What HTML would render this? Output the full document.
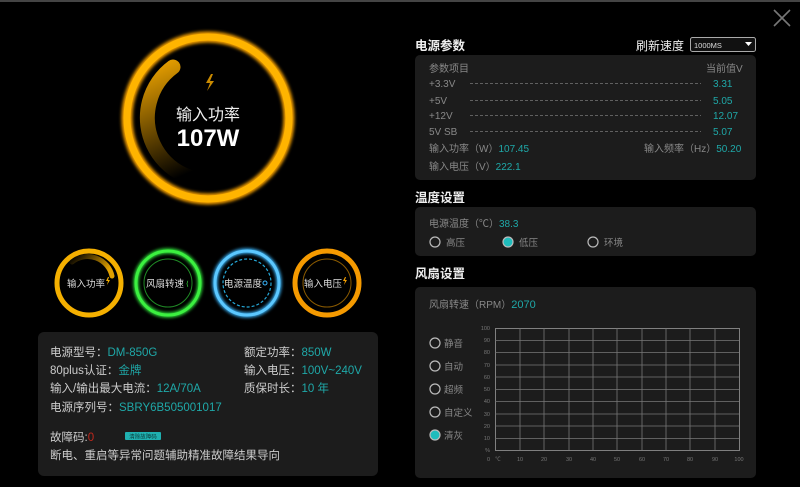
<!DOCTYPE html><html><head><meta charset="utf-8"><style>
body{margin:0;width:800px;height:487px;background:#000;overflow:hidden;font-family:"Liberation Sans","Noto Sans CJK SC",sans-serif}
</style></head><body>
<svg width="800" height="487" viewBox="0 0 800 487" xmlns="http://www.w3.org/2000/svg" style="position:absolute;left:0;top:0;font-family:'Liberation Sans','Noto Sans CJK SC',sans-serif">
<defs>
<linearGradient id="ag" x1="0" y1="0" x2="0.3" y2="1"><stop offset="0" stop-color="#e8a000"/><stop offset="1" stop-color="#000"/></linearGradient>
<linearGradient id="ag2" x1="1" y1="0.5" x2="0" y2="0"><stop offset="0" stop-color="#e0a000"/><stop offset="1" stop-color="#000"/></linearGradient>
<filter id="gl"><feGaussianBlur stdDeviation="1.5"/></filter>
</defs>
<rect x="0" y="0" width="800" height="2" fill="#444"/>
<path d="M774 10 L790 26 M790 10 L774 26" stroke="#777" stroke-width="1.6"/>
<circle cx="208" cy="118" r="81" fill="none" stroke="#f5a000" stroke-width="11" filter="url(#gl)"/>
<circle cx="208" cy="118" r="81" fill="none" stroke="#ffb400" stroke-width="7"/>
<path d="M173 67 A63 63 0 0 0 225 179" fill="none" stroke="url(#ag)" stroke-width="15" stroke-linecap="round"/>
<path d="M211 74 L206 83 L210 83 L207 91 L214 81 L210 81 L213 74Z" fill="#c98a00"/>
<text x="208" y="120" fill="#eee" font-size="16" text-anchor="middle">输入功率</text>
<text x="208" y="146" fill="#fff" font-size="24" font-weight="bold" text-anchor="middle">107W</text>
<circle cx="89" cy="283" r="32" fill="none" stroke="#f5b000" stroke-width="5"/>
<path d="M72 262 A25 25 0 0 1 112 276" fill="none" stroke="url(#ag2)" stroke-width="5" stroke-linecap="round"/>
<text x="86" y="287" fill="#ddd" font-size="9.5" text-anchor="middle">输入功率</text>
<path d="M108 277 l-2 4 h2 l-1 4 l3 -5 h-2 l1 -3z" fill="#f5b000"/>
<circle cx="168" cy="283" r="32" fill="none" stroke="#2ee63a" stroke-width="5" filter="url(#gl)"/>
<circle cx="168" cy="283" r="32" fill="none" stroke="#3cf040" stroke-width="3"/>
<circle cx="168" cy="283" r="24" fill="none" stroke="#1f8a25" stroke-width="1"/>
<text x="165" y="287" fill="#ddd" font-size="9.5" text-anchor="middle">风扇转速</text>
<text x="186" y="286" fill="#3cf040" font-size="7">⟨</text>
<circle cx="247" cy="283" r="32" fill="none" stroke="#3ab8ff" stroke-width="5" filter="url(#gl)"/>
<circle cx="247" cy="283" r="32" fill="none" stroke="#5cc8ff" stroke-width="3"/>
<circle cx="247" cy="283" r="24" fill="none" stroke="#25a8d8" stroke-width="1.2" stroke-dasharray="3 2"/>
<text x="243" y="287" fill="#ddd" font-size="9.5" text-anchor="middle">电源温度</text>
<circle cx="265" cy="283" r="2" fill="none" stroke="#3ab8ff"/>
<circle cx="327" cy="283" r="32" fill="none" stroke="#f59a00" stroke-width="5"/>
<circle cx="327" cy="283" r="24" fill="none" stroke="#8a5a00" stroke-width="1"/>
<text x="323" y="287" fill="#ddd" font-size="9.5" text-anchor="middle">输入电压</text>
<path d="M345 277 l-2 4 h2 l-1 4 l3 -5 h-2 l1 -3z" fill="#f5a000"/>
<rect x="38" y="332" width="340" height="144" rx="6" fill="#1c1c1c"/>
<g font-size="11.5" fill="#ccc">
<text x="50" y="356">电源型号：<tspan fill="#1fa8a8">DM-850G</tspan></text>
<text x="50" y="374">80plus认证：<tspan fill="#1fa8a8">金牌</tspan></text>
<text x="50" y="392">输入/输出最大电流：<tspan fill="#1fa8a8">12A/70A</tspan></text>
<text x="50" y="411">电源序列号：<tspan fill="#1fa8a8">SBRY6B505001017</tspan></text>
<text x="244" y="356">额定功率：<tspan fill="#1fa8a8">850W</tspan></text>
<text x="244" y="374">输入电压：<tspan fill="#1fa8a8">100V~240V</tspan></text>
<text x="244" y="392">质保时长：<tspan fill="#1fa8a8">10 年</tspan></text>
<text x="50" y="441">故障码:<tspan fill="#c0281c">0</tspan></text>
<text x="50" y="459">断电、重启等异常问题辅助精准故障结果导向</text>
</g>
<rect x="125" y="432" width="36" height="8" rx="1" fill="#1fb0b0"/>
<text x="143" y="438.5" font-size="5.5" fill="#0c3c3c" text-anchor="middle">清除故障码</text>
<g font-size="12.5" fill="#eee" font-weight="bold">
<text x="415" y="50">电源参数</text>
<text x="415" y="202">温度设置</text>
<text x="415" y="278">风扇设置</text>
</g>
<text x="636" y="50" font-size="12" fill="#eee">刷新速度</text>
<rect x="690.5" y="37.5" width="65" height="14" rx="2" fill="#111" stroke="#aaa"/>
<text x="694" y="48" font-size="7.5" fill="#ddd">1000MS</text>
<path d="M745 42 h7 l-3.5 4z" fill="#fff"/>
<rect x="415" y="55" width="341" height="125" rx="5" fill="#1c1c1c"/>
<g font-size="10" fill="#888">
<text x="429" y="72">参数项目</text>
<text x="706" y="72">当前值V</text>
<text x="429" y="87">+3.3V</text>
<text x="429" y="104">+5V</text>
<text x="429" y="119">+12V</text>
<text x="429" y="135">5V SB</text>
<text x="429" y="152">输入功率（W）<tspan fill="#1fa8a8">107.45</tspan></text>
<text x="644" y="152">输入频率（Hz）<tspan fill="#1fa8a8">50.20</tspan></text>
<text x="429" y="170">输入电压（V）<tspan fill="#1fa8a8">222.1</tspan></text>
</g>
<g stroke="#777" stroke-dasharray="3 2" stroke-width="0.7">
<path d="M470 83.5 H701 M470 100.5 H701 M470 115.5 H701 M470 131.5 H701"/>
</g>
<g font-size="10" fill="#1fa8a8">
<text x="713" y="87">3.31</text><text x="713" y="104">5.05</text><text x="713" y="119">12.07</text><text x="713" y="135">5.07</text>
</g>
<rect x="415" y="207" width="341" height="49" rx="5" fill="#1c1c1c"/>
<text x="429" y="227" font-size="10" fill="#888">电源温度（℃）<tspan fill="#1fa8a8">38.3</tspan></text>
<g font-size="9.5" fill="#888">
<circle cx="435" cy="242" r="5" fill="none" stroke="#bbb" stroke-width="1.2"/><text x="446" y="246">高压</text>
<circle cx="508" cy="242" r="5" fill="#1fbcbc" stroke="#bbb" stroke-width="1.2"/><text x="519" y="246">低压</text>
<circle cx="593" cy="242" r="5" fill="none" stroke="#bbb" stroke-width="1.2"/><text x="604" y="246">环境</text>
</g>
<rect x="415" y="287" width="341" height="191" rx="5" fill="#1c1c1c"/>
<text x="429" y="308" font-size="10" fill="#888">风扇转速（RPM）<tspan fill="#1fa8a8" font-size="11">2070</tspan></text>
<g font-size="9.5" fill="#888">
<circle cx="435" cy="343" r="5" fill="none" stroke="#bbb" stroke-width="1.2"/><text x="444" y="347">静音</text>
<circle cx="435" cy="366" r="5" fill="none" stroke="#bbb" stroke-width="1.2"/><text x="444" y="370">自动</text>
<circle cx="435" cy="389" r="5" fill="none" stroke="#bbb" stroke-width="1.2"/><text x="444" y="393">超频</text>
<circle cx="435" cy="412" r="5" fill="none" stroke="#bbb" stroke-width="1.2"/><text x="444" y="416">自定义</text>
<circle cx="435" cy="435" r="5" fill="#1fbcbc" stroke="#bbb" stroke-width="1.2"/><text x="444" y="439">清灰</text>
</g>
<g stroke="#777" stroke-width="0.8" fill="none">
<rect x="495.5" y="328.5" width="244" height="122" stroke="#999"/>
<path d="M520 328v122M544 328v122M569 328v122M593 328v122M617 328v122M642 328v122M666 328v122M690 328v122M715 328v122"/>
<path d="M495 340.5h244M495 352.5h244M495 365h244M495 377h244M495 389.5h244M495 401.5h244M495 414h244M495 426h244M495 438.5h244"/>
</g>
<g font-size="5.5" fill="#777" text-anchor="end">
<text x="490" y="330">100</text><text x="490" y="342">90</text><text x="490" y="354">80</text><text x="490" y="367">70</text><text x="490" y="379">60</text><text x="490" y="391">50</text><text x="490" y="403">40</text><text x="490" y="416">30</text><text x="490" y="428">20</text><text x="490" y="440">10</text><text x="490" y="452">%</text><text x="490" y="461">0</text>
</g>
<g font-size="5.5" fill="#777" text-anchor="middle">
<text x="498" y="461">℃</text><text x="520" y="461">10</text><text x="544" y="461">20</text><text x="569" y="461">30</text><text x="593" y="461">40</text><text x="617" y="461">50</text><text x="642" y="461">60</text><text x="666" y="461">70</text><text x="690" y="461">80</text><text x="715" y="461">90</text><text x="739" y="461">100</text>
</g>
</svg>
</body></html>
